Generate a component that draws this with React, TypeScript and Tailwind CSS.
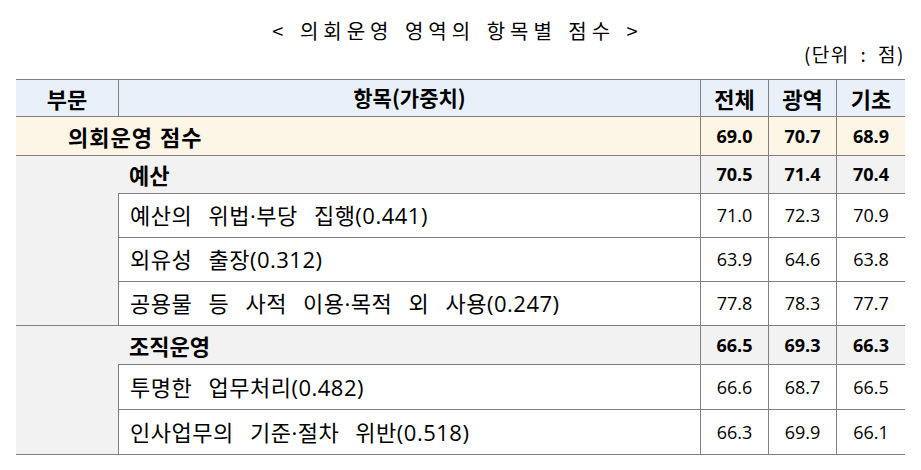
import React from "react";

type Item = { label: string; total: string; metro: string; basic: string };
type Group = { name: string; total: string; metro: string; basic: string; items: Item[] };

const groups: Group[] = [
  {
    name: "예산",
    total: "70.5",
    metro: "71.4",
    basic: "70.4",
    items: [
      { label: "예산의 위법·부당 집행(0.441)", total: "71.0", metro: "72.3", basic: "70.9" },
      { label: "외유성 출장(0.312)", total: "63.9", metro: "64.6", basic: "63.8" },
      { label: "공용물 등 사적 이용·목적 외 사용(0.247)", total: "77.8", metro: "78.3", basic: "77.7" },
    ],
  },
  {
    name: "조직운영",
    total: "66.5",
    metro: "69.3",
    basic: "66.3",
    items: [
      { label: "투명한 업무처리(0.482)", total: "66.6", metro: "68.7", basic: "66.5" },
      { label: "인사업무의 기준·절차 위반(0.518)", total: "66.3", metro: "69.9", basic: "66.1" },
    ],
  },
];

const line = "border-[#808080]";
const ko = "font-['Noto_Sans_CJK_KR',sans-serif]";
const numCell = `flex items-center justify-center border-b border-l ${line} text-[18px]`;

const App = () => {
  return (
    <div className="w-[921px] h-[470px] bg-white text-black font-['Open_Sans','Noto_Sans_CJK_KR',sans-serif]">
      {/* title */}
      <div className={`h-[79px] pt-[20px] ${ko}`}>
        <div className="h-[22px] flex justify-center items-center pr-[6px] text-[20px] tracking-[5px] [word-spacing:2px] leading-none">
          &lt; 의회운영 영역의 항목별 점수 &gt;
        </div>
        <div className="mt-[1px] h-[20px] flex justify-end items-center pr-[16px] text-[19px] tracking-[1.5px] [word-spacing:5px] leading-none">
          (단위 : 점)
        </div>
      </div>

      <div
        className={`ml-[16px] w-[889px] grid grid-cols-[102px_582px_68px_68px_69px] grid-rows-[37px_39px_38px_44px_44px_44px_39px_45px_45px] border-t ${line}`}
      >
        {/* header */}
        <div className={`bg-[#e9f0f9] border-b ${line} flex items-center justify-center font-bold text-[22px] ${ko}`}>부문</div>
        <div className={`bg-[#e9f0f9] border-b border-l ${line} flex items-center justify-center font-bold text-[21px] ${ko}`}>
          항목(가중치)
        </div>
        <div className={`bg-[#e9f0f9] ${numCell} font-bold !text-[22px] ${ko}`}>전체</div>
        <div className={`bg-[#e9f0f9] ${numCell} font-bold !text-[22px] ${ko}`}>광역</div>
        <div className={`bg-[#e9f0f9] ${numCell} font-bold !text-[22px] ${ko}`}>기초</div>

        {/* total row */}
        <div
          className={`col-span-2 bg-[#fdf5e6] border-b ${line} flex items-center pl-[52px] font-bold text-[22px] tracking-[1px] [word-spacing:1px] ${ko}`}
        >
          의회운영 점수
        </div>
        <div className={`bg-[#fdf5e6] ${numCell} font-bold`}>69.0</div>
        <div className={`bg-[#fdf5e6] ${numCell} font-bold`}>70.7</div>
        <div className={`bg-[#fdf5e6] ${numCell} font-bold`}>68.9</div>

        {groups.map((g) => (
          <React.Fragment key={g.name}>
            <div
              className={`bg-[#f2f2f2] border-b ${line} ${g.items.length === 3 ? "row-span-4" : "row-span-3"}`}
            />
            <div className={`bg-[#f2f2f2] border-b ${line} flex items-center pl-[11px] font-bold text-[22px] ${ko}`}>
              {g.name}
            </div>
            <div className={`bg-[#f2f2f2] ${numCell} font-bold`}>{g.total}</div>
            <div className={`bg-[#f2f2f2] ${numCell} font-bold`}>{g.metro}</div>
            <div className={`bg-[#f2f2f2] ${numCell} font-bold`}>{g.basic}</div>
            {g.items.map((it) => (
              <React.Fragment key={it.label}>
                <div
                  className={`border-b border-l ${line} flex items-center pl-[11px] text-[22px] tracking-[0.5px] [word-spacing:10px]`}
                >
                  {it.label}
                </div>
                <div className={numCell}>{it.total}</div>
                <div className={numCell}>{it.metro}</div>
                <div className={numCell}>{it.basic}</div>
              </React.Fragment>
            ))}
          </React.Fragment>
        ))}
      </div>
    </div>
  );
};

export default App;
